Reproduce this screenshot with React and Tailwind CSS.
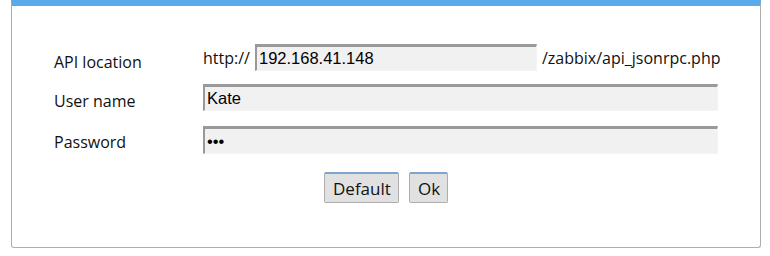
export default function App() {
  const label = "text-[16px] text-[#111] font-['Open_Sans',sans-serif] leading-none";
  const field =
    "h-[27px] bg-[#f1f1f1] border-t-[3px] border-l-[2px] border-r border-b border-t-[#999] border-l-[#999] border-r-[#f4f4f4] border-b-[#f4f4f4] px-[2px] text-[16.5px] text-black font-['Liberation_Sans',Arial,sans-serif] outline-none";
  const button =
    "h-[31px] px-[8px] bg-[#e1e1e1] border border-[#adadad] border-t-[#7ea4cf] border-t-2 rounded-[2px] text-[17px] text-[#111] font-['Open_Sans',sans-serif] leading-none";

  return (
    <div className="w-[770px] h-[256px] bg-white">
      <div className="ml-[11px] w-[750px] h-[248px] border border-[#adadad] border-t-[6px] border-t-[#5aa9e8] rounded-b-[3px] pt-[38px]">
        <div className="grid grid-cols-[149px_1fr] ml-[42px] items-center gap-y-[13px]">
          <div className={label + " pt-[8px]"}>API location</div>
          <div className="flex items-center">
            <span className={label + " mr-[5px]"}>http://</span>
            <input className={field + " w-[282px] h-[26px]"} defaultValue="192.168.41.148" />
            <span className={label + " ml-[5px]"}>/zabbix/api_jsonrpc.php</span>
          </div>

          <div className={label + " pt-[7px]"}>User name</div>
          <input className={field + " w-[515px]"} defaultValue="Kate" />

          <div className={label + " pt-[5px]"}>Password</div>
          <input className={field + " w-[515px] mt-[2px] h-[28px]"} type="password" defaultValue="abc" />
        </div>

        <div className="flex justify-center gap-[10px] mt-[18px]">
          <button className={button + " w-[75px]"}>Default</button>
          <button className={button + " w-[39px] px-0"}>Ok</button>
        </div>
      </div>
    </div>
  );
}
